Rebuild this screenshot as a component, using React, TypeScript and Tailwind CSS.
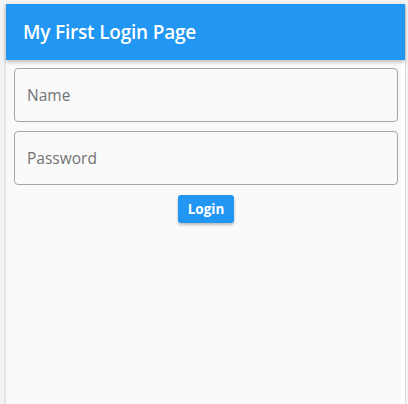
import React from "react";

export default function App() {
  return (
    <div
      className="w-[408px] h-[404px] bg-[#f3f3f3] pt-1 pl-[4px] pr-[2px] flex"
      style={{ fontFamily: '"Open Sans", "Noto Sans", sans-serif' }}
    >
      <div className="flex-1 flex flex-col border-l-2 border-r border-l-[#e6e6e6] border-r-[#dcdcdc] bg-[#fafafa]">
        <header className="h-14 bg-[#2196f3] flex items-center pl-[17px] shadow-[0_2px_4px_rgba(0,0,0,0.25)] relative z-10">
          <h1 className="text-white text-[19px] font-semibold tracking-[-0.2px]">My First Login Page</h1>
        </header>
        <div className="flex-1 flex flex-col pl-2 pr-[7px] pt-2 shadow-[inset_-4px_0_0_#ffffff]">
          <input
            className="h-[54px] rounded-[4px] border border-[#a6a6a6] bg-transparent px-3 text-[15.5px] text-[#333] placeholder:text-[#737373] outline-none"
            placeholder="Name"
          />
          <input
            type="password"
            className="mt-[9px] h-[54px] rounded-[4px] border border-[#a6a6a6] bg-transparent px-3 text-[15.5px] text-[#333] placeholder:text-[#737373] outline-none"
            placeholder="Password"
          />
          <div className="flex justify-center mt-[10px]">
            <button className="h-7 w-14 rounded-[3px] bg-[#2196f3] text-white text-[13.5px] font-bold shadow-[0_2px_3px_rgba(0,0,0,0.25)]">
              Login
            </button>
          </div>
        </div>
      </div>
    </div>
  );
}
